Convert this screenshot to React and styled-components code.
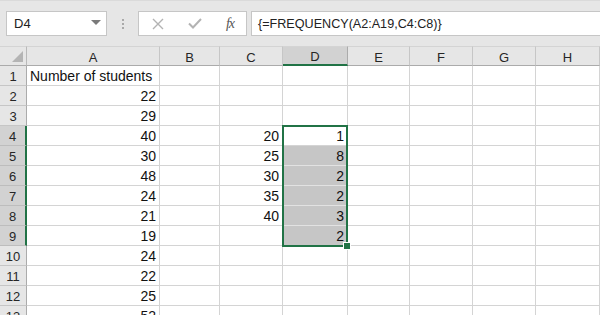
import styled, { createGlobalStyle } from 'styled-components';

const GlobalStyle = createGlobalStyle`
  html, body {
    margin: 0;
    padding: 0;
    background: #ffffff;
    overflow: hidden;
  }
  body {
    font-family: "Liberation Sans", Arial, sans-serif;
  }
`

const GREEN = '#217346'

const columns = [
    { name: 'A', width: 133 },
    { name: 'B', width: 60 },
    { name: 'C', width: 63 },
    { name: 'D', width: 65 },
    { name: 'E', width: 62 },
    { name: 'F', width: 63 },
    { name: 'G', width: 63 },
    { name: 'H', width: 64 },
]

const students = [22, 29, 40, 30, 48, 24, 21, 19, 24, 22, 25, 52]
const bins = { 4: 20, 5: 25, 6: 30, 7: 35, 8: 40 }
const freq = { 4: 1, 5: 8, 6: 2, 7: 2, 8: 3, 9: 2 }

const Screen = styled.div`
  width: 600px;
  height: 315px;
  overflow: hidden;
  background: #ffffff;
`

const Toolbar = styled.div`
  height: 46px;
  box-sizing: border-box;
  background: #e6e6e6;
  border-top: 1px solid #dadada;
  display: flex;
  align-items: flex-start;
  padding: 10px 0 0 6px;
`

const NameBox = styled.div`
  width: 101px;
  height: 25px;
  box-sizing: border-box;
  background: #ffffff;
  border: 1px solid #c6c6c6;
  display: flex;
  align-items: center;
  justify-content: space-between;
  padding: 0 5px 0 7px;
  font-size: 13px;
  color: #222;
`

const DropArrow = styled.span`
  width: 0;
  height: 0;
  border-left: 5px solid transparent;
  border-right: 5px solid transparent;
  border-top: 5px solid #7a7a7a;
  margin-top: -2px;
`

const Grip = styled.div`
  width: 2px;
  height: 25px;
  margin: 0 14px 0 15px;
  display: flex;
  flex-direction: column;
  justify-content: center;
  gap: 2px;

  span {
    width: 2px;
    height: 2px;
    background: #a9a9a9;
  }
`

const FxBox = styled.div`
  width: 109px;
  height: 25px;
  box-sizing: border-box;
  background: #ffffff;
  border: 1px solid #c6c6c6;
  display: flex;
  align-items: center;
  justify-content: space-between;
  padding: 0 12px 0 13px;
`

const FxLabel = styled.span`
  font-family: "Liberation Serif", "Times New Roman", serif;
  font-style: italic;
  font-size: 14px;
  color: #555;
  letter-spacing: -1px;
`

const FormulaInput = styled.div`
  flex: 1;
  height: 25px;
  margin-left: 4px;
  box-sizing: border-box;
  background: #ffffff;
  border: 1px solid #c6c6c6;
  border-right: none;
  display: flex;
  align-items: center;
  padding-left: 6px;
  font-size: 12.6px;
  color: #222;
`

const Sheet = styled.div`
  position: relative;
  display: grid;
  grid-template-columns: 27px ${columns.map(c => c.width + 'px').join(' ')};
  grid-auto-rows: 20px;
`

const Corner = styled.div`
  background: #e6e6e6;
  border-right: 1px solid #b9b9b9;
  border-bottom: 1px solid #ababab;
  border-top: 1px solid #d4d4d4;
  box-sizing: border-box;
  position: relative;

  &::after {
    content: '';
    position: absolute;
    right: 3px;
    bottom: 3px;
    width: 0;
    height: 0;
    border-left: 11px solid transparent;
    border-bottom: 11px solid #b4b4b4;
  }
`

const ColHeader = styled.div`
  box-sizing: border-box;
  background: ${p => (p.$active ? '#d2d2d2' : '#e6e6e6')};
  border-top: 1px solid #d4d4d4;
  border-right: 1px solid ${p => (p.$active ? '#ababab' : '#c6c6c6')};
  border-bottom: ${p => (p.$active ? `2px solid ${GREEN}` : '1px solid #ababab')};
  display: flex;
  align-items: center;
  justify-content: center;
  font-size: 13px;
  color: #262626;
  padding-top: 2px;
`

const RowHeader = styled.div`
  box-sizing: border-box;
  background: ${p => (p.$active ? '#d2d2d2' : '#e6e6e6')};
  border-right: ${p => (p.$active ? `2px solid ${GREEN}` : '1px solid #ababab')};
  border-bottom: 1px solid ${p => (p.$active ? '#bdbdbd' : '#c6c6c6')};
  display: flex;
  align-items: flex-end;
  justify-content: center;
  padding-bottom: 1px;
  font-size: 13px;
  color: #262626;
`

const Cell = styled.div`
  box-sizing: border-box;
  background: ${p => (p.$filled ? '#c6c6c6' : '#ffffff')};
  border-right: 1px solid #d4d4d4;
  border-bottom: 1px solid ${p => (p.$filled ? '#e2e2e2' : '#d4d4d4')};
  display: flex;
  align-items: flex-end;
  justify-content: ${p => (p.$number ? 'flex-end' : 'flex-start')};
  padding: 0 3px 1px 3px;
  font-size: 14px;
  color: #111;
  white-space: nowrap;
  overflow: visible;
`

const Selection = styled.div`
  position: absolute;
  left: 282px;
  top: 79px;
  width: 66px;
  height: 122px;
  box-sizing: border-box;
  border: 2px solid ${GREEN};
  pointer-events: none;
`

const FillHandle = styled.div`
  position: absolute;
  right: -5px;
  bottom: -5px;
  width: 6px;
  height: 6px;
  background: ${GREEN};
  border: 1px solid #ffffff;
`

function CancelIcon () {
    return (
        <svg width="12" height="12" viewBox="0 0 12 12">
            <path d="M1 1 L11 11 M11 1 L1 11" stroke="#b3b3b3" strokeWidth="1.4" fill="none" />
        </svg>
    )
}

function EnterIcon () {
    return (
        <svg width="14" height="11" viewBox="0 0 14 11">
            <path d="M1 5.5 L5 9.5 L13 1" stroke="#b3b3b3" strokeWidth="2" fill="none" />
        </svg>
    )
}

function cellValue (row, col) {
    if (col === 'A') {
        if (row === 1) return 'Number of students'
        return students[row - 2]
    }
    if (col === 'C') return bins[row]
    if (col === 'D') return freq[row]
    return undefined
}

function App () {
    const rows = Array.from({ length: 13 }, (_, i) => i + 1)

    return (
        <Screen>
            <GlobalStyle />
            <Toolbar>
                <NameBox>
                    D4
                    <DropArrow />
                </NameBox>
                <Grip><span /><span /><span /></Grip>
                <FxBox>
                    <CancelIcon />
                    <EnterIcon />
                    <FxLabel>fx</FxLabel>
                </FxBox>
                <FormulaInput>{'{=FREQUENCY(A2:A19,C4:C8)}'}</FormulaInput>
            </Toolbar>
            <Sheet>
                <Corner />
                {columns.map(c => (
                    <ColHeader key={c.name} $active={c.name === 'D'}>{c.name}</ColHeader>
                ))}
                {rows.map(r => [
                    <RowHeader key={'h' + r} $active={r >= 4 && r <= 9}>{r}</RowHeader>,
                    ...columns.map(c => {
                        const v = cellValue(r, c.name)
                        return (
                            <Cell
                                key={c.name + r}
                                $number={typeof v === 'number'}
                                $filled={c.name === 'D' && r >= 5 && r <= 9}
                            >
                                {v}
                            </Cell>
                        )
                    }),
                ])}
                <Selection>
                    <FillHandle />
                </Selection>
            </Sheet>
        </Screen>
    )
}

export default App;
